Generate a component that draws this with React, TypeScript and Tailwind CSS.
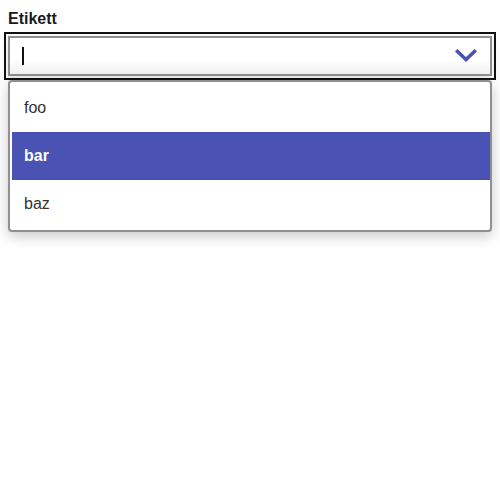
import React from "react";

export default function App() {
  return (
    <div className="min-h-[500px] w-[500px] bg-white p-2" style={{ fontFamily: '"Liberation Sans", Arial, sans-serif' }}>
      <label className="block text-[16px] font-bold leading-[18px] text-[#1a1a1a] mt-[2px]">Etikett</label>
      <div className="mt-[8px] flex h-[40px] items-center justify-between border-2 border-[#8f8f94] bg-gradient-to-b from-white from-60% to-[#f2f2f2] pl-[12px] pr-[12px] outline-2 outline-offset-[2px] outline-[#111] shadow-[0_2px_8px_rgba(0,0,0,0.12)]">
        <span className="h-[18px] w-[1.5px] bg-[#111]" />
        <svg width="22" height="14" viewBox="0 0 22 14" className="mr-[1px]">
          <path d="M2.5 2.5 L11 10.5 L19.5 2.5" fill="none" stroke="#4a52b4" strokeWidth="3.6" strokeLinecap="square" />
        </svg>
      </div>
      <ul className="mt-[4px] rounded-[4px] border-2 border-[#8f8f94] bg-white py-[2px] pl-[2px] pr-0 shadow-[0_4px_14px_rgba(0,0,0,0.22)]">
        <li className="flex h-[48px] items-center pl-[12px] text-[16px] text-[#333]">foo</li>
        <li className="flex h-[48px] items-center bg-[#4a52b4] pl-[12px] text-[16px] font-bold text-white">bar</li>
        <li className="flex h-[48px] items-center pl-[12px] text-[16px] text-[#333]">baz</li>
      </ul>
    </div>
  );
}
